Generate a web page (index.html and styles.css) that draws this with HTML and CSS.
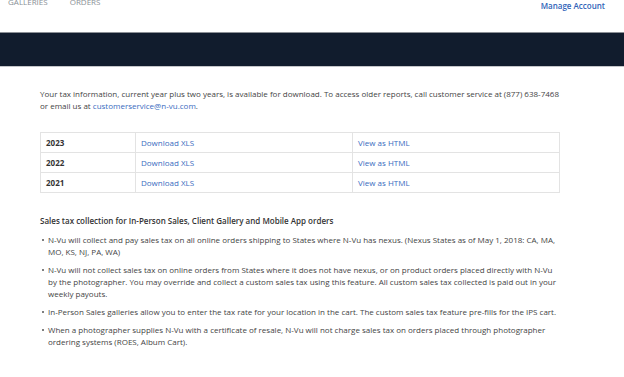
FILE: index.html
```html
<!DOCTYPE html>
<html lang="en">
  <head>
    <meta charset="UTF-8" />
    <title>Tax Information</title>
    <link rel="stylesheet" href="styles.css">
  </head>
  <body>
    <div class="topbar">
      <ul class="nav">
        <li>GALLERIES</li>
        <li>ORDERS</li>
      </ul>
      <a class="account" href="#">Manage Account</a>
    </div>
    <div class="band"></div>

    <div class="content">
      <p class="intro">Your tax information, current year plus two years, is available for download. To access older reports, call customer service at (877) 638-7468 or email us at <a href="#">customerservice@n-vu.com</a>.</p>

      <table class="years">
        <tr>
          <td class="year">2023</td>
          <td><a href="#">Download XLS</a></td>
          <td><a href="#">View as HTML</a></td>
        </tr>
        <tr>
          <td class="year">2022</td>
          <td><a href="#">Download XLS</a></td>
          <td><a href="#">View as HTML</a></td>
        </tr>
        <tr>
          <td class="year">2021</td>
          <td><a href="#">Download XLS</a></td>
          <td><a href="#">View as HTML</a></td>
        </tr>
      </table>

      <h4>Sales tax collection for In-Person Sales, Client Gallery and Mobile App orders</h4>
      <ul class="notes">
        <li>N-Vu will collect and pay sales tax on all online orders shipping to States where N-Vu has nexus. (Nexus States as of May 1, 2018: CA, MA, MO, KS, NJ, PA, WA)</li>
        <li>N-Vu will not collect sales tax on online orders from States where it does not have nexus, or on product orders placed directly with N-Vu by the photographer. You may override and collect a custom sales tax using this feature. All custom sales tax collected is paid out in your weekly payouts.</li>
        <li>In-Person Sales galleries allow you to enter the tax rate for your location in the cart. The custom sales tax feature pre-fills for the IPS cart.</li>
        <li>When a photographer supplies N-Vu with a certificate of resale, N-Vu will not charge sales tax on orders placed through photographer ordering systems (ROES, Album Cart).</li>
      </ul>
    </div>
  </body>
</html>
```

FILE: styles.css
```css
body {
  font-family: "Open Sans", Arial, sans-serif;
  font-size: 8px;
  color: #444;
  background-color: #fff;
  margin: 0;
  padding: 0;
  overflow: hidden;
}
a {
  color: #3a6cc0;
  text-decoration: none;
}
.topbar {
  display: flex;
  justify-content: space-between;
  height: 40px;
  margin-top: -8px;
}
.nav {
  display: flex;
  gap: 22px;
  list-style: none;
  margin: 0;
  padding: 4px 0 0 8px;
  color: #8a8f96;
  font-size: 8px;
}
.account {
  font-weight: 600;
  font-size: 8px;
  padding: 8px 19px 0 0;
  color: #2f63b8;
}
.band {
  height: 33px;
  background-color: #111c2d;
  border-top: 1px solid #8c9096;
  border-bottom: 1px solid #c4c6c9;
}
.content {
  padding: 0 64px 0 40px;
}
.intro {
  line-height: 12px;
  margin: 21px 0 20px;
}
.years {
  width: 520px;
  border-collapse: collapse;
  margin-bottom: 22px;
}
.years td {
  border: 1px solid #e3e3e3;
  height: 19px;
  padding: 0 5px;
}
.years td:first-child {
  width: 84px;
}
.years td:nth-child(2) {
  width: 206px;
}
.year {
  font-weight: 700;
  color: #333;
}
h4 {
  font-size: 8px;
  font-weight: 600;
  color: #333;
  margin: 0 0 8px;
}
.notes {
  list-style: none;
  margin: 0;
  padding: 0 0 0 2px;
}
.notes li {
  position: relative;
  padding-left: 6px;
  line-height: 12px;
  margin-bottom: 6px;
}
.notes li::before {
  content: "";
  position: absolute;
  left: 0;
  top: 5px;
  width: 2px;
  height: 2px;
  background-color: #555;
  border-radius: 50%;
}
```
